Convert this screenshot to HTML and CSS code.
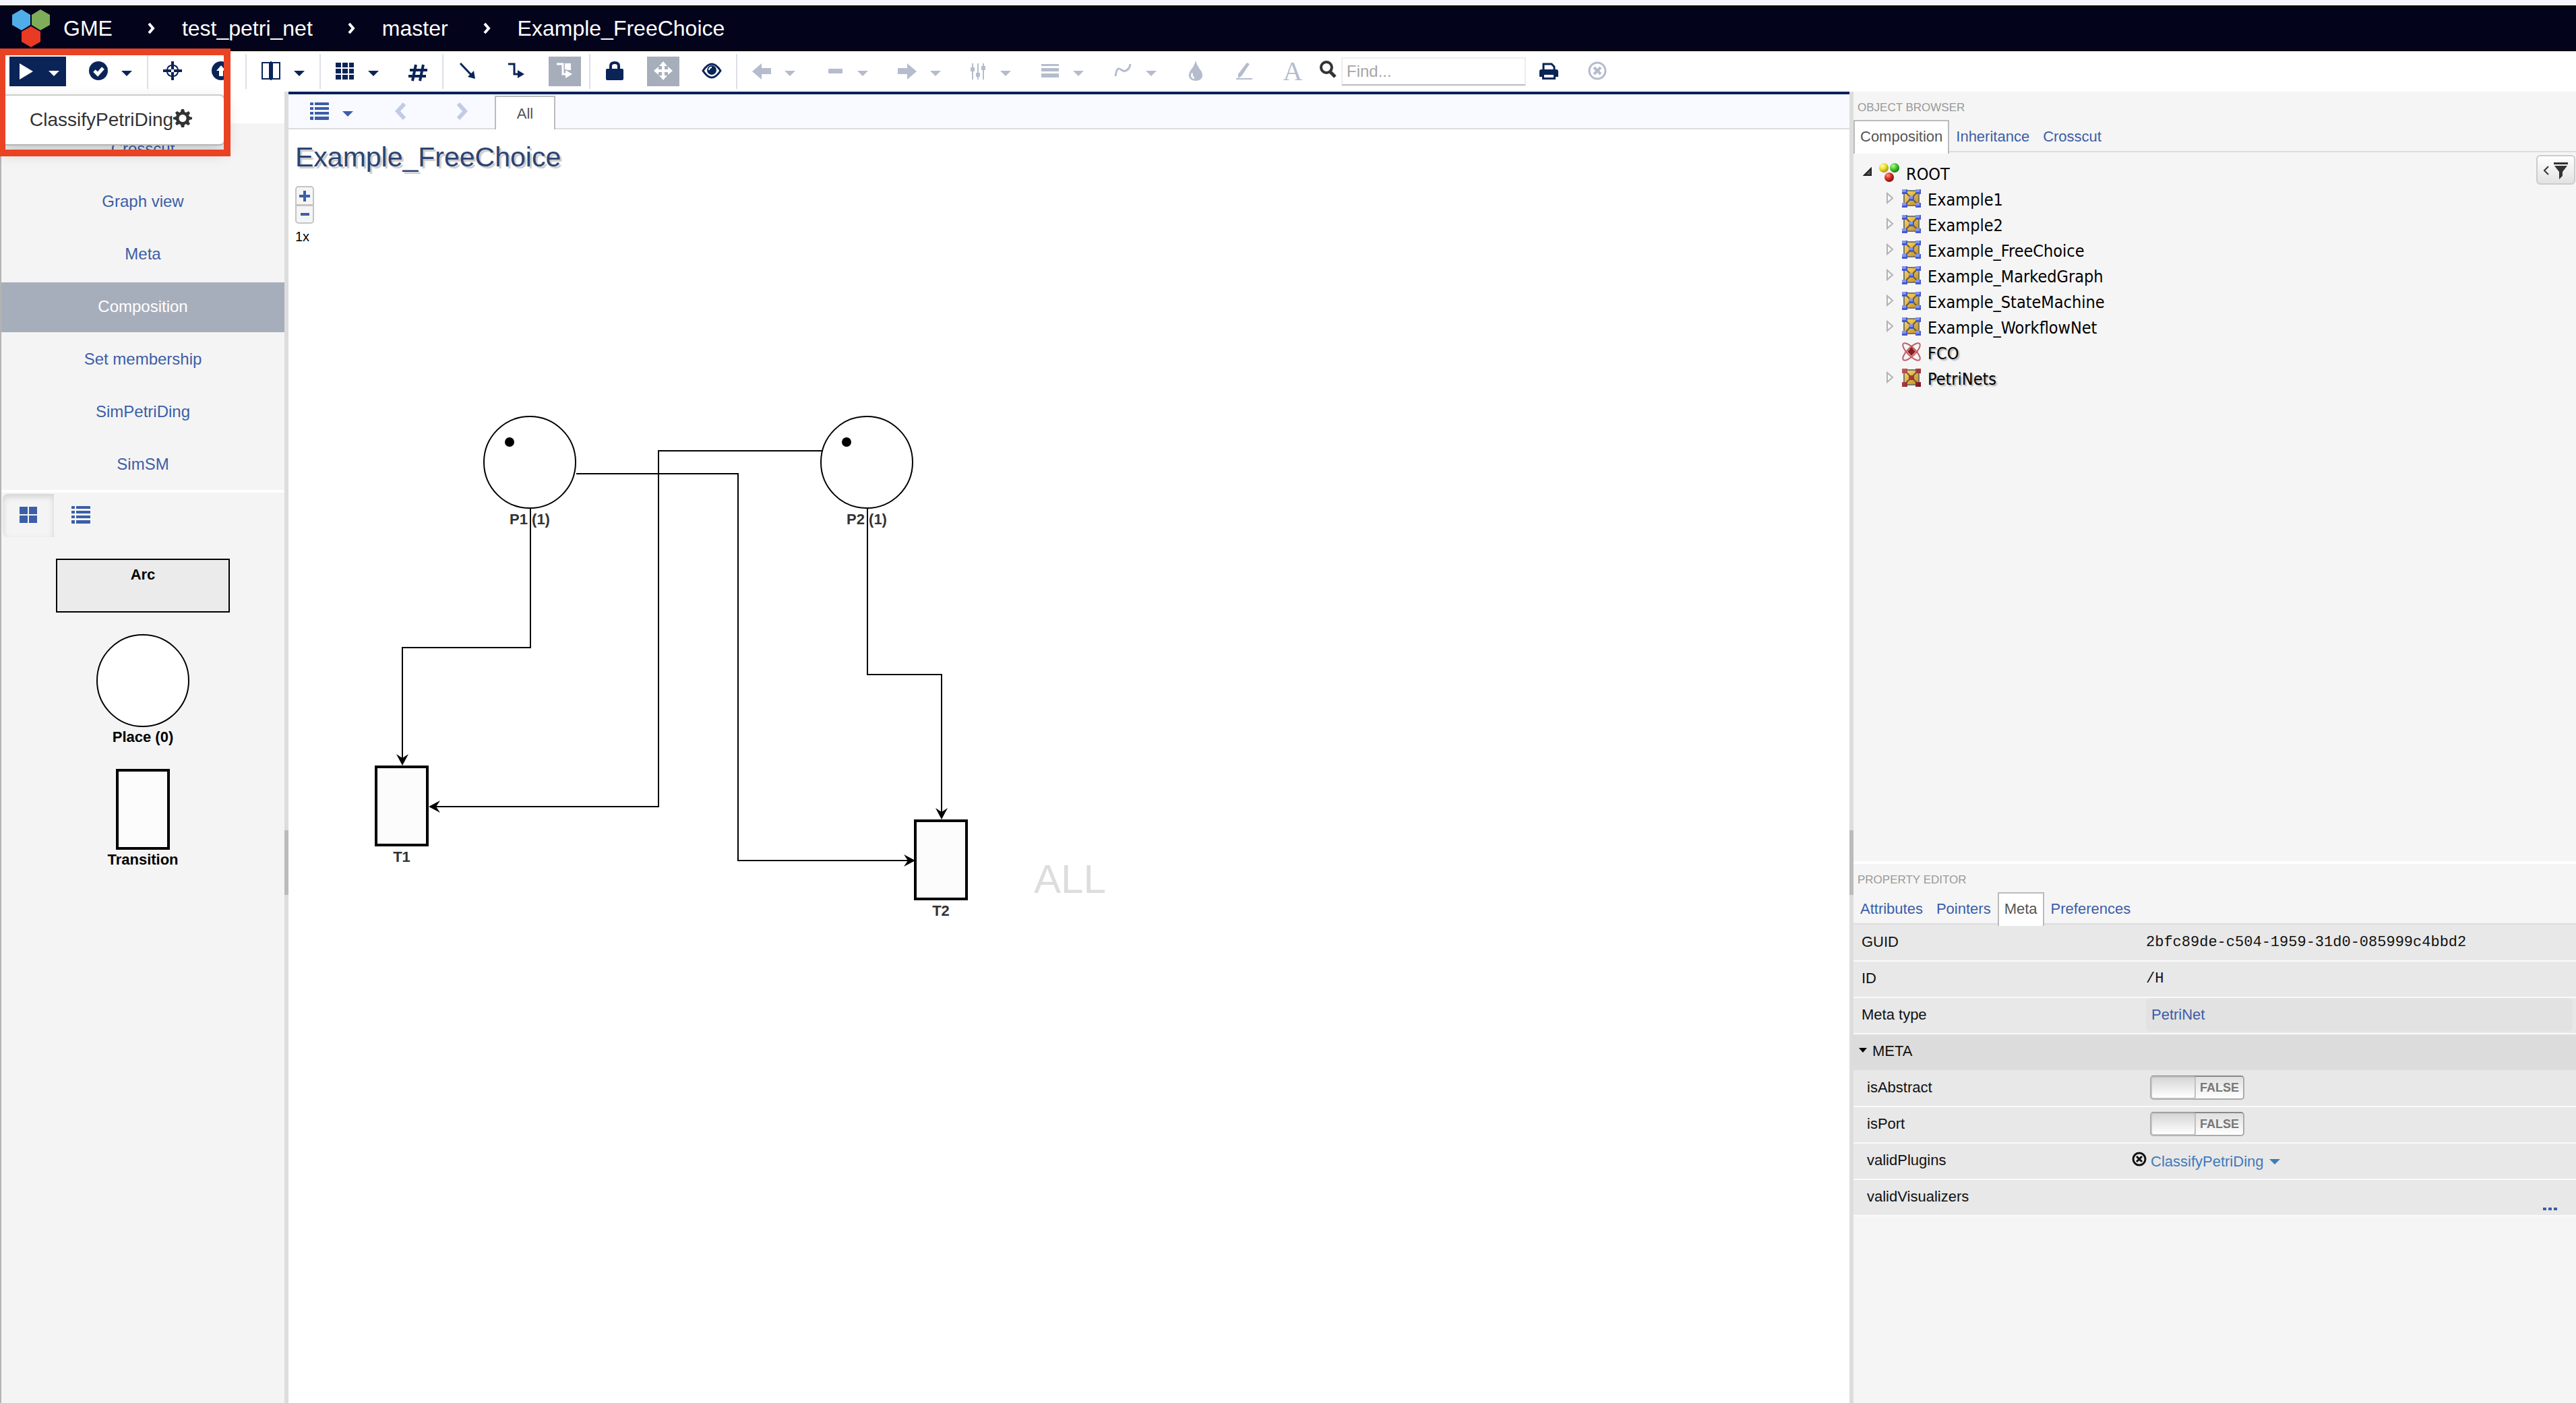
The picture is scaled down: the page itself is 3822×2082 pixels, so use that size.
FILE: index.html
```html
<!DOCTYPE html>
<html lang="en">
<head>
<meta charset="utf-8">
<title>GME - Example_FreeChoice</title>
<link rel="stylesheet" href="styles.css">
</head>
<body>
<svg class="defs" aria-hidden="true">
  <defs>
    <linearGradient id="gold" x1="0" y1="0" x2="1" y2="1"><stop offset="0" stop-color="#ffdc6a"/><stop offset="1" stop-color="#c08a20"/></linearGradient>
    <linearGradient id="red" x1="0" y1="0" x2="1" y2="1"><stop offset="0" stop-color="#c85a5a"/><stop offset="1" stop-color="#7c1420"/></linearGradient>
    <radialGradient id="ballY" cx=".35" cy=".3" r=".7"><stop offset="0" stop-color="#ffffb0"/><stop offset=".5" stop-color="#efe030"/><stop offset="1" stop-color="#a89a10"/></radialGradient>
    <radialGradient id="ballG" cx=".35" cy=".3" r=".7"><stop offset="0" stop-color="#b0ff9a"/><stop offset=".5" stop-color="#48cf30"/><stop offset="1" stop-color="#1c7a10"/></radialGradient>
    <radialGradient id="ballR" cx=".35" cy=".3" r=".7"><stop offset="0" stop-color="#ff9a8a"/><stop offset=".5" stop-color="#dd2f22"/><stop offset="1" stop-color="#84100a"/></radialGradient>
    <symbol id="caret" viewBox="0 0 16 8"><path d="M0 0h16L8 8z"/></symbol>
    <symbol id="closed" viewBox="0 0 14 20"><path d="M2 3v14l8-7z" fill="#fafafa" stroke="#b2b2b2" stroke-width="2"/></symbol>
    <symbol id="model" viewBox="0 0 28 28">
      <rect x="3" y="3" width="22" height="22" fill="url(#gold)" stroke="#77776c" stroke-width="2"/>
      <path d="M4 4l20 20M24 4L4 24" stroke="#6a5a30" stroke-width="2"/>
      <path d="M0 1h8v7H0zM20 1h8v7h-8zM0 21h8v7H0zM20 21h8v7h-8zM10 11h8v7h-8z" fill="#4459cc"/>
      <path d="M0 1h6v4H0zM20 1h6v4h-6zM0 21h6v4H0zM20 21h6v4h-6zM10 11h6v4h-6z" fill="#7f95f2"/>
    </symbol>
    <symbol id="meta" viewBox="0 0 28 28">
      <rect x="3" y="3" width="22" height="22" fill="url(#gold)" stroke="#77776c" stroke-width="2"/>
      <path d="M4 4l20 20M24 4L4 24" stroke="#6a5a30" stroke-width="2"/>
      <path d="M0 1h8v7H0zM20 1h8v7h-8zM0 21h8v7H0zM20 21h8v7h-8zM10 11h8v7h-8z" fill="url(#red)"/>
    </symbol>
    <symbol id="list" viewBox="0 0 28 26"><path d="M0 1q0-1 1-1h3q1 0 1 1v3H0zM7 0h20q1 0 1 1v3H7zM0 7h5v4H0zM7 7h21v4H7zM0 14h5v4H0zM7 14h21v4H7zM0 21h5v5H1q-1 0-1-1zM7 21h21v4q0 1-1 1H7z"/></symbol>
  </defs>
</svg>

<header class="header">
  <nav class="crumbs" aria-label="Breadcrumb">
    <a class="brand" href="#">
      <svg class="logo" width="56" height="56" viewBox="0 0 56 56" aria-hidden="true"><path d="M14 0l13 8v15l-13 8L0 23V8z" fill="#4faee8"/><path d="M42 0l14 8v15l-14 8-13-8V8z" fill="#7fac58"/><path d="M28 25l14 8v15l-14 8-14-8V33z" fill="#e93a24"/></svg>
      <span>GME</span></a>
    <svg class="sep" width="12" height="18" viewBox="0 0 12 18" aria-hidden="true"><path d="M2 2l6 7-6 7"/></svg>
    <a href="#">test_petri_net</a>
    <svg class="sep" width="12" height="18" viewBox="0 0 12 18" aria-hidden="true"><path d="M2 2l6 7-6 7"/></svg>
    <a href="#">master</a>
    <svg class="sep" width="12" height="18" viewBox="0 0 12 18" aria-hidden="true"><path d="M2 2l6 7-6 7"/></svg>
    <a href="#">Example_FreeChoice</a>
  </nav>
</header>

<div class="toolbar" role="toolbar" aria-label="Main toolbar">
  <div class="group">
    <div class="dropdown">
      <button class="tool wide primary" aria-label="Run plugin"><svg width="28" height="28" viewBox="0 0 28 28"><path d="M5 3v24l20-12z"/></svg><svg class="caret" width="16" height="8"><use href="#caret"/></svg></button>
      <div class="menu"><a href="#">ClassifyPetriDing<svg width="28" height="28" viewBox="0 0 28 28" aria-hidden="true"><path fill-rule="evenodd" d="M12 1h4l1 4 2 1 4-2 2 3-2 3 1 2 4 1v3l-4 1-1 2 2 4-3 2-3-2-2 1-1 4h-4l-1-4-2-1-4 2-2-3 2-3-1-2-4-1v-3l4-1 1-2-2-4 3-2 3 2 2-1zM14 9a5 5 0 1 0 0 11 5 5 0 1 0 0-11z"/></svg></a></div>
    </div>
    <button class="tool wide" aria-label="Results"><svg width="28" height="28" viewBox="0 0 28 28"><circle cx="14" cy="14" r="14"/><path d="M8 14l5 5 8-9" fill="none" stroke="#fff" stroke-width="5"/></svg><svg class="caret" width="16" height="8"><use href="#caret"/></svg></button>
  </div>
  <div class="group">
    <button class="tool" aria-label="Center"><svg width="28" height="28" viewBox="0 0 28 28"><path fill-rule="evenodd" d="M12 0h4v5q6 1 7 7h5v4h-5q-1 6-7 7v5h-4v-5q-6-1-7-7H0v-4h5q1-6 7-7zM12 7q-4 1-5 5h5zM16 7v5h5q-1-4-5-5zM7 16q1 4 5 5v-5zM16 16v5q4-1 5-5zM12 12v4h4v-4z"/></svg></button>
    <button class="tool" aria-label="Go to parent"><svg width="28" height="28" viewBox="0 0 28 28"><circle cx="14" cy="14" r="14"/><path d="M14 6l7 8h-4v8h-6v-8H7z" fill="#fff"/></svg></button>
  </div>
  <div class="group">
    <button class="tool wide" aria-label="Columns"><svg width="28" height="28" viewBox="0 0 28 28"><path d="M1 2h11v24H1zM16 2h11v24H16zM14 0v28" fill="none" stroke="#0a2458" stroke-width="2"/></svg><svg class="caret" width="16" height="8"><use href="#caret"/></svg></button>
  </div>
  <div class="group">
    <button class="tool wide" aria-label="Grid layout"><svg width="28" height="28" viewBox="0 0 28 28"><path d="M0 2h8v7H0zM10 2h8v7h-8zM20 2h7v7h-7zM0 11h8v7H0zM10 11h8v7h-8zM20 11h7v7h-7zM0 20h8v7H0zM10 20h8v7h-8zM20 20h7v7h-7z"/></svg><svg class="caret" width="16" height="8"><use href="#caret"/></svg></button>
    <button class="tool" aria-label="Snap to grid"><svg width="28" height="28" viewBox="0 0 28 28"><path d="M11 5L6 29M22 5l-5 24M2 13h26M0 22h26" fill="none" stroke="#0a2458" stroke-width="4"/></svg></button>
  </div>
  <div class="group">
    <button class="tool" aria-label="Straight line"><svg width="28" height="28" viewBox="0 0 28 28"><path d="M3 3l17 18" stroke="#0a2458" stroke-width="3"/><path d="M25 26l-11-3 9-9z"/></svg></button>
    <button class="tool" aria-label="Routed line"><svg width="28" height="28" viewBox="0 0 28 28"><path d="M2 4h9v15h6" fill="none" stroke="#0a2458" stroke-width="3"/><path d="M16 13l10 6-10 6z"/></svg></button>
    <button class="tool active" aria-label="Smart line"><svg width="28" height="28" viewBox="0 0 28 28"><path d="M2 4h9v15h6" fill="none" stroke="#fff" stroke-width="3"/><path d="M14 3h9v10h-6v-1h-3zM15 13l10 6-10 6z"/></svg></button>
  </div>
  <div class="group">
    <button class="tool" aria-label="Lock"><svg width="28" height="28" viewBox="0 0 28 28"><path d="M8 13V7q0-5 6-5t6 5v6" fill="none" stroke="#0a2458" stroke-width="4"/><rect x="1" y="11" width="26" height="17" rx="2"/></svg></button>
    <button class="tool active" aria-label="Pan"><svg width="28" height="28" viewBox="0 0 28 28"><path d="M14 0l6 7h-4v5h5V8l7 6-7 6v-4h-5v5h4l-6 7-6-7h4v-5H7v4l-7-6 7-6v4h5V7H8z"/></svg></button>
    <button class="tool" aria-label="Preview"><svg width="30" height="24" viewBox="0 0 30 24"><path d="M2 12Q15-8 28 12 15 32 2 12z" fill="none" stroke="#0a2458" stroke-width="3"/><circle cx="15" cy="11" r="7"/><path d="M11 11q0-4 4-4" fill="none" stroke="#fff" stroke-width="2"/></svg></button>
  </div>
  <div class="group last">
    <button class="tool wide" disabled aria-label="Line start"><svg width="28" height="28" viewBox="0 0 28 28"><path d="M0 15L14 3v7h14v9H14v8z"/></svg><svg class="caret" width="16" height="8"><use href="#caret"/></svg></button>
    <button class="tool wide" disabled aria-label="Line pattern"><svg width="28" height="28" viewBox="0 0 28 28"><rect x="5" y="11" width="21" height="7" rx="1"/></svg><svg class="caret" width="16" height="8"><use href="#caret"/></svg></button>
    <button class="tool wide" disabled aria-label="Line end"><svg width="28" height="28" viewBox="0 0 28 28"><path d="M28 15L14 3v7H0v9h14v8z"/></svg><svg class="caret" width="16" height="8"><use href="#caret"/></svg></button>
    <button class="tool wide narrow" disabled aria-label="Opacity"><svg width="24" height="28" viewBox="0 0 24 28"><path d="M2 3h2v24H2zM10 3h2v24h-2zM18 3h2v24h-2zM0 9h6v6H0zM8 17h6v6H8zM16 7h6v6h-6z"/></svg><svg class="caret" width="16" height="8"><use href="#caret"/></svg></button>
    <button class="tool wide" disabled aria-label="Line width"><svg width="28" height="28" viewBox="0 0 28 28"><path d="M1 4h26v3H1zM1 10h26v5H1zM1 18h26v6H1z"/></svg><svg class="caret" width="16" height="8"><use href="#caret"/></svg></button>
    <button class="tool wide" disabled aria-label="Line type"><svg width="28" height="28" viewBox="0 0 28 28"><path d="M3 22C6 0 12 18 18 14q6-2 7-10" fill="none" stroke="#b5bccd" stroke-width="3"/></svg><svg class="caret" width="16" height="8"><use href="#caret"/></svg></button>
    <button class="tool" disabled aria-label="Fill color"><svg width="28" height="30" viewBox="0 0 28 30"><path fill-rule="evenodd" d="M14 0q2 8 8 15 5 8-1 13-7 4-14 0-6-5-1-13 6-7 8-15zM8 18q-3 7 3 9 2 0 1-2-3-2-2-6z"/></svg></button>
    <button class="tool" disabled aria-label="Border color"><svg width="28" height="28" viewBox="0 0 28 28"><path d="M18 2l4 2-12 18-5 3v-6zM2 25h24v2H2z"/></svg></button>
    <button class="tool letter" disabled aria-label="Text color">A</button>
  </div>
  <form class="search">
    <label for="find"><svg width="26" height="26" viewBox="0 0 26 26" aria-label="Find"><circle cx="10" cy="10" r="8" fill="none" stroke="#333" stroke-width="4"/><path d="M15 16l8 8" stroke="#333" stroke-width="5"/></svg></label>
    <input id="find" type="text" placeholder="Find...">
  </form>
  <div class="group last tail">
    <button class="tool" aria-label="Print"><svg width="28" height="28" viewBox="0 0 28 28"><path d="M6 13V4h12l4 4v5" fill="none" stroke="#0a2458" stroke-width="3"/><path fill-rule="evenodd" d="M3 12h22q3 0 3 3v8h-4v4H4v-4H0v-8q0-3 3-3zM7 20v4h14v-4z"/></svg></button>
    <button class="tool" disabled aria-label="Clear"><svg width="28" height="28" viewBox="0 0 28 28"><circle cx="14" cy="14" r="12" fill="none" stroke="#b5bccd" stroke-width="3"/><path d="M9 9l10 10M19 9L9 19" stroke="#b5bccd" stroke-width="4"/></svg></button>
  </div>
</div>

<main class="workspace">
  <aside class="left">
    <nav class="views" aria-label="Visualizers">
      <a href="#">Crosscut</a>
      <a href="#">Graph view</a>
      <a href="#">Meta</a>
      <a href="#" class="current">Composition</a>
      <a href="#">Set membership</a>
      <a href="#">SimPetriDing</a>
      <a href="#">SimSM</a>
    </nav>
    <section class="parts">
      <div class="parts-mode">
        <button class="pressed" aria-label="Grid"><svg width="26" height="26" viewBox="0 0 26 26"><path d="M0 1h12v11H0zM14 1h12v11H14zM0 14h12v11H0zM14 14h12v11H14z"/></svg></button>
        <button aria-label="List"><svg width="28" height="26"><use href="#list"/></svg></button>
      </div>
      <div class="palette">
        <div class="arc">Arc</div>
        <figure><div class="place"></div><figcaption>Place (0)</figcaption></figure>
        <figure><div class="transition"></div><figcaption>Transition</figcaption></figure>
      </div>
    </section>
  </aside>
  <div class="splitter"><i></i></div>

  <section class="center">
    <div class="viewbar">
      <button class="aspects" aria-label="Aspects"><svg width="28" height="26"><use href="#list"/></svg><svg class="caret" width="16" height="8"><use href="#caret"/></svg></button>
      <button class="step" aria-label="Previous"><svg width="18" height="26" viewBox="0 0 18 26"><path d="M14 2L4 13l10 11"/></svg></button>
      <button class="step" aria-label="Next"><svg width="18" height="26" viewBox="0 0 18 26"><path d="M4 2l10 11L4 24"/></svg></button>
      <a class="tab on" href="#">All</a>
    </div>
    <div class="canvas">
      <h1>Example_FreeChoice</h1>
      <div class="zoom">
        <button aria-label="Zoom in"><svg width="18" height="18" viewBox="0 0 18 18"><path d="M7 1h4v6h6v4h-6v6H7v-6H1V7h6z"/></svg></button>
        <button aria-label="Zoom out"><svg width="18" height="18" viewBox="0 0 18 18"><path d="M3 7h13v4H3z"/></svg></button>
      </div>
      <p class="level">1x</p>
      <svg class="arcs" width="1300" height="1200" viewBox="0 0 1300 1200" aria-hidden="true">
        <g fill="none" stroke="#000" stroke-width="2">
          <path d="M359 563V769H169V940"/>
          <path d="M792 477H549V1005H212"/>
          <path d="M427 511H667V1085H926"/>
          <path d="M859 563V809H969V1020"/>
        </g>
        <path d="M169 944l-9-17 9 6 9-6zM208 1005l17-9-6 9 6 9zM930 1085l-17-9 6 9-6 9zM969 1024l-9-17 9 6 9-6z"/>
      </svg>
      <div class="node p1"><div class="place"><i></i></div><span>P1 (1)</span></div>
      <div class="node p2"><div class="place"><i></i></div><span>P2 (1)</span></div>
      <div class="node t1"><div class="transition"></div><span>T1</span></div>
      <div class="node t2"><div class="transition"></div><span>T2</span></div>
      <div class="watermark">ALL</div>
    </div>
  </section>
  <div class="splitter"><i></i></div>

  <aside class="right">
    <section class="browser">
      <h2>OBJECT BROWSER</h2>
      <div class="tabs"><a class="tab on" href="#">Composition</a><a class="tab" href="#">Inheritance</a><a class="tab" href="#">Crosscut</a></div>
      <button class="filter" aria-label="Filter"><svg width="46" height="28" viewBox="0 0 46 28"><path d="M12 9l-6 6 6 6" fill="none" stroke="#333" stroke-width="2"/><path d="M20 3h21v3H20zM21 8h19l-7 9v6l-5 5V17z" fill="#333"/></svg></button>
      <ul class="tree">
        <li class="root"><svg width="14" height="20" viewBox="0 0 14 20"><path d="M2 14L12 4v10z" fill="#555" stroke="#222" stroke-width="2"/></svg><svg width="30" height="28" viewBox="0 0 30 28"><circle cx="7" cy="7" r="7" fill="url(#ballY)"/><circle cx="23" cy="7" r="7" fill="url(#ballG)"/><circle cx="15" cy="21" r="7" fill="url(#ballR)"/></svg><span>ROOT</span></li>
        <li><svg width="14" height="20"><use href="#closed"/></svg><svg width="28" height="28"><use href="#model"/></svg><span>Example1</span></li>
        <li><svg width="14" height="20"><use href="#closed"/></svg><svg width="28" height="28"><use href="#model"/></svg><span>Example2</span></li>
        <li><svg width="14" height="20"><use href="#closed"/></svg><svg width="28" height="28"><use href="#model"/></svg><span>Example_FreeChoice</span></li>
        <li><svg width="14" height="20"><use href="#closed"/></svg><svg width="28" height="28"><use href="#model"/></svg><span>Example_MarkedGraph</span></li>
        <li><svg width="14" height="20"><use href="#closed"/></svg><svg width="28" height="28"><use href="#model"/></svg><span>Example_StateMachine</span></li>
        <li><svg width="14" height="20"><use href="#closed"/></svg><svg width="28" height="28"><use href="#model"/></svg><span>Example_WorkflowNet</span></li>
        <li class="shaded"><svg width="14" height="20"></svg><svg width="28" height="28" viewBox="0 0 28 28"><g fill="none" stroke="#c0606c" stroke-width="2"><ellipse cx="14" cy="14" rx="17" ry="6" transform="rotate(45 14 14)"/><ellipse cx="14" cy="14" rx="17" ry="6" transform="rotate(-45 14 14)"/></g><path d="M14 7l6 7-6 6-6-6z" fill="#8e1c1c"/></svg><span>FCO</span></li>
        <li class="shaded"><svg width="14" height="20"><use href="#closed"/></svg><svg width="28" height="28"><use href="#meta"/></svg><span>PetriNets</span></li>
      </ul>
    </section>
    <section class="editor">
      <h2>PROPERTY EDITOR</h2>
      <div class="tabs"><a class="tab" href="#">Attributes</a><a class="tab" href="#">Pointers</a><a class="tab on" href="#">Meta</a><a class="tab" href="#">Preferences</a></div>
      <table>
        <tr><th scope="row">GUID</th><td class="mono">2bfc89de-c504-1959-31d0-085999c4bbd2</td></tr>
        <tr><th scope="row">ID</th><td class="mono">/H</td></tr>
        <tr><th scope="row">Meta type</th><td><a class="pointer" href="#">PetriNet</a></td></tr>
        <tr class="section"><th colspan="2"><svg width="12" height="8" viewBox="0 0 12 8" aria-hidden="true"><path d="M0 0h12L6 7z"/></svg>META</th></tr>
        <tr class="sub"><th scope="row"><label for="abs">isAbstract</label></th><td><div class="switch"><input id="abs" type="checkbox"><span>FALSE</span></div></td></tr>
        <tr class="sub"><th scope="row"><label for="port">isPort</label></th><td><div class="switch"><input id="port" type="checkbox"><span>FALSE</span></div></td></tr>
        <tr class="sub"><th scope="row">validPlugins</th><td><div class="plugin"><button aria-label="Remove"><svg width="22" height="22" viewBox="0 0 22 22"><circle cx="11" cy="11" r="9" fill="none" stroke="#111" stroke-width="3"/><path d="M7 7l8 8M15 7l-8 8" stroke="#111" stroke-width="3"/></svg></button><a href="#">ClassifyPetriDing<svg width="16" height="8"><use href="#caret"/></svg></a></div></td></tr>
        <tr class="sub"><th scope="row">validVisualizers</th><td class="more"><button aria-label="Edit"><svg width="22" height="4" viewBox="0 0 22 4"><path d="M0 0h5v4H0zM8 0h5v4H8zM16 0h5v4h-5z"/></svg></button></td></tr>
      </table>
    </section>
  </aside>
</main>
<div class="highlight" aria-hidden="true"></div>
</body>
</html>
```

FILE: styles.css
```css
* { box-sizing: border-box; }
body {
  margin: 0;
  min-height: 100vh;
  display: flex;
  flex-direction: column;
  position: relative;
  border-top: 8px solid #f5f6fb;
  background: #fff;
  color: #111;
  font: 22px/30px "Liberation Sans", Arial, sans-serif;
}
a { color: #3b5ea8; text-decoration: none; }
button { border: 0; padding: 0; margin: 0; background: none; font: inherit; color: inherit; }
svg { display: block; flex: none; overflow: visible; }
h1, h2, p, ul, figure { margin: 0; padding: 0; }
.defs { position: absolute; width: 0; height: 0; }

/* Header */
.header { height: 68px; background: #03031c; border: solid #000; border-width: 2px 0; padding-left: 18px; display: flex; align-items: center; }
.crumbs { display: flex; align-items: center; font-size: 32px; line-height: 38px; }
.crumbs a { color: #fff; }
.brand { display: flex; align-items: center; gap: 20px; }
.sep { margin: 0 39px 0 52px; fill: none; stroke: #fff; stroke-width: 4px; }

/* Toolbar */
.toolbar { display: flex; align-items: center; height: 60px; border-left: 2px solid #b4b4b4; }
.group { display: flex; align-items: center; gap: 24px; height: 52px; padding: 0 12px; border-right: 2px solid #dde0e8; }
.group.last { border-right: 0; }
.group.tail { padding-left: 10px; }
.tool { width: 48px; height: 44px; display: flex; align-items: center; justify-content: center; fill: #0a2458; }
.tool > svg:first-child { margin-bottom: 2px; }
.tool.wide { width: 84px; gap: 20px; }
.tool.narrow { width: 80px; }
.tool .caret { margin-top: 6px; }
.tool.primary { background: #0a2458; fill: #fff; }
.tool.active { background: #a7aebb; fill: #fff; }
.tool:disabled { fill: #b5bccd; color: #b5bccd; }
.letter { font: 40px/44px "Liberation Serif", serif; }
.dropdown { position: relative; z-index: 2; }
.menu {
  position: absolute; left: -12px; top: 56px; width: 332px; height: 76px;
  background: #fff; border: 2px solid #ccc; border-bottom-color: #b4b4b4; border-radius: 8px;
  box-shadow: 0 10px 24px rgba(0,0,0,.18);
  padding: 18px 0 0 40px;
}
.menu a { display: flex; align-items: center; color: #333; fill: #333; font-size: 28px; line-height: 36px; }
.menu svg { margin-bottom: 6px; }
.search { display: flex; align-items: center; gap: 6px; padding-left: 4px; }
.search label { margin-bottom: 6px; }
.search input {
  width: 274px; height: 42px; padding: 0 6px; border: 2px solid #eee; border-bottom-color: #bbb;
  font: 24px/30px "Liberation Sans", Arial, sans-serif; color: #333; background: #fff; outline: 0;
}
.search input::placeholder { color: #a6a6a6; }

/* Workspace */
.workspace { flex: 1; display: grid; grid-template-columns: 420px 6px minmax(0, 1fr) 6px 1072px; border-left: 2px solid #b4b4b4; }
.splitter { background: #ddd; display: flex; align-items: center; padding-top: 342px; }
.splitter i { width: 6px; height: 96px; background: #bbb; }

.left { display: flex; flex-direction: column; gap: 4px; padding-top: 47px; }
.views { background: #f4f4f4; display: flex; flex-direction: column; gap: 4px; padding-top: 2px; }
.views a { height: 74px; line-height: 72px; text-align: center; font-size: 24px; }
.views .current { background: #a7aebb; color: #fff; }
.parts { flex: 1; background: #f4f4f4; }
.parts-mode { display: flex; gap: 2px; padding: 2px; fill: #3b5ea8; }
.parts-mode button { width: 76px; height: 64px; display: flex; align-items: center; justify-content: center; padding-bottom: 2px; }
.parts-mode .pressed { border-radius: 8px 0 0 8px; box-shadow: inset 0 4px 10px rgba(0,0,0,.14); }
.palette { display: flex; flex-direction: column; align-items: center; gap: 32px; padding-top: 30px; font-weight: bold; color: #000; }
.palette figure { display: flex; flex-direction: column; align-items: center; }
.arc { width: 258px; height: 80px; border: 2px solid #000; background: #ebebeb; text-align: center; padding-top: 7px; }
.place { width: 138px; height: 138px; border: 2px solid #000; border-radius: 50%; background: #fff; }
.transition { width: 80px; height: 120px; border: 4px solid #000; background: #fcfcfc; }

/* Center */
.center { display: flex; flex-direction: column; border-top: 4px solid #05215a; }
.viewbar { height: 52px; background: #f9faff; border-bottom: 2px solid #ddd; display: flex; align-items: center; padding-left: 32px; }
.aspects { display: flex; align-items: center; gap: 20px; fill: #3b5ea8; margin-right: 62px; }
.aspects .caret { margin-top: 8px; }
.step { margin-right: 72px; fill: none; stroke: #c0cce4; stroke-width: 6px; }
.step + .step { margin-right: 40px; }
.tab { display: block; height: 50px; padding: 8px 8px 0; border: 2px solid transparent; border-bottom: 0; }
.tab.on { background: #fff; border-color: #bbb; color: #555; }
.viewbar .tab { width: 90px; align-self: flex-end; margin-bottom: -2px; padding-top: 10px; text-align: center; }
.canvas { flex: 1; position: relative; padding: 18px 10px; }
.canvas h1 { font-size: 41px; line-height: 46px; font-weight: normal; color: #2c4474; text-shadow: 3px 3px 1px #ccc; }
.zoom { width: 28px; margin-top: 20px; border: 2px solid #c4c4c4; border-radius: 5px; background: #f5f5f5; }
.zoom button { display: flex; align-items: center; justify-content: center; width: 24px; height: 25px; fill: #3b5ea8; }
.zoom button + button { border-top: 3px solid #c4c4c4; height: 27px; }
.level { font-size: 20px; line-height: 24px; margin-top: 7px; color: #000; }
.arcs { position: absolute; left: 0; top: 0; }
.node { position: absolute; display: flex; flex-direction: column; align-items: center; width: 138px; gap: 1px; font-weight: bold; color: #333; }
.p1 { left: 289px; top: 425px; }
.p2 { left: 789px; top: 425px; }
.t1 { left: 99px; top: 944px; }
.t2 { left: 899px; top: 1024px; }
.node .place, .node span { background: none; }
.place i { display: block; width: 14px; height: 14px; margin: 30px; border-radius: 50%; background: #000; }
.watermark { position: absolute; left: 1106px; top: 1079px; font-size: 60px; line-height: 68px; color: #ddd; }

/* Right */
.right { display: grid; grid-template-rows: 1142fr 800fr; gap: 4px; }
.browser, .editor { background: #f5f5f5; }
.browser { position: relative; }
.right h2 { font-size: 17px; line-height: 36px; font-weight: normal; color: #999; padding: 6px 0 0 6px; }
.tabs { display: flex; height: 48px; border-bottom: 2px solid #ddd; }
.filter { position: absolute; right: 1px; top: 94px; width: 58px; height: 44px; border: 2px solid #ccc; border-radius: 6px; background: linear-gradient(#fff, #e2e2e2); display: flex; align-items: center; justify-content: center; }
.tree { list-style: none; padding-top: 11px; font: 25px/32px "DejaVu Sans Condensed", "DejaVu Sans", sans-serif; font-stretch: condensed; color: #000; }
.tree li { display: flex; align-items: center; gap: 10px; height: 38px; padding-left: 48px; }
.tree .root { padding-left: 14px; }
.tree span { padding-top: 5px; }
.shaded span { text-shadow: 2px 2px 2px #aaa; }

table { width: 100%; border-collapse: collapse; table-layout: fixed; background: #e8e8e8; }
tr { height: 54px; border-bottom: 2px solid #fafafa; }
th, td { padding: 0 0 2px; text-align: left; font-weight: normal; }
th { width: 434px; padding-left: 12px; }
.section { background: #dcdcdc; border-color: #e2e2e2; }
.section th { padding-left: 8px; }
.section svg { display: inline-block; margin-right: 8px; vertical-align: 4px; }
.sub th { padding-left: 20px; }
.mono { font: 22px/30px "Liberation Mono", monospace; padding-bottom: 0; }
.pointer { display: block; margin-right: 5px; height: 50px; padding: 10px 8px; border-radius: 8px; background: #e2e2e2; }
.switch { display: flex; align-items: center; width: 140px; height: 36px; margin-left: 6px; border: 2px solid #aaa; border-top-color: #888; border-radius: 5px; background: linear-gradient(#e0e0e0, #fff); font-size: 18px; font-weight: bold; color: #777; }
.switch input { appearance: none; width: 67px; height: 34px; margin: 0 6px 0 -1px; border: 2px solid #c0c0c0; border-radius: 4px; background: linear-gradient(#d6d6d6, #fff); }
.plugin { display: flex; align-items: center; gap: 6px; margin-left: -21px; }
.plugin button { margin-bottom: 4px; }
.plugin a { display: flex; align-items: center; gap: 8px; color: #3f7bbb; fill: #3f7bbb; padding-top: 3px; }
.more button { display: block; margin: 36px 27px 0 auto; fill: #3b5ea8; }

/* Callout frame */
.highlight { position: absolute; z-index: 5; left: 0; top: 64px; width: 342px; height: 160px; border: 10px solid #e94324; border-left-width: 8px; }
```
